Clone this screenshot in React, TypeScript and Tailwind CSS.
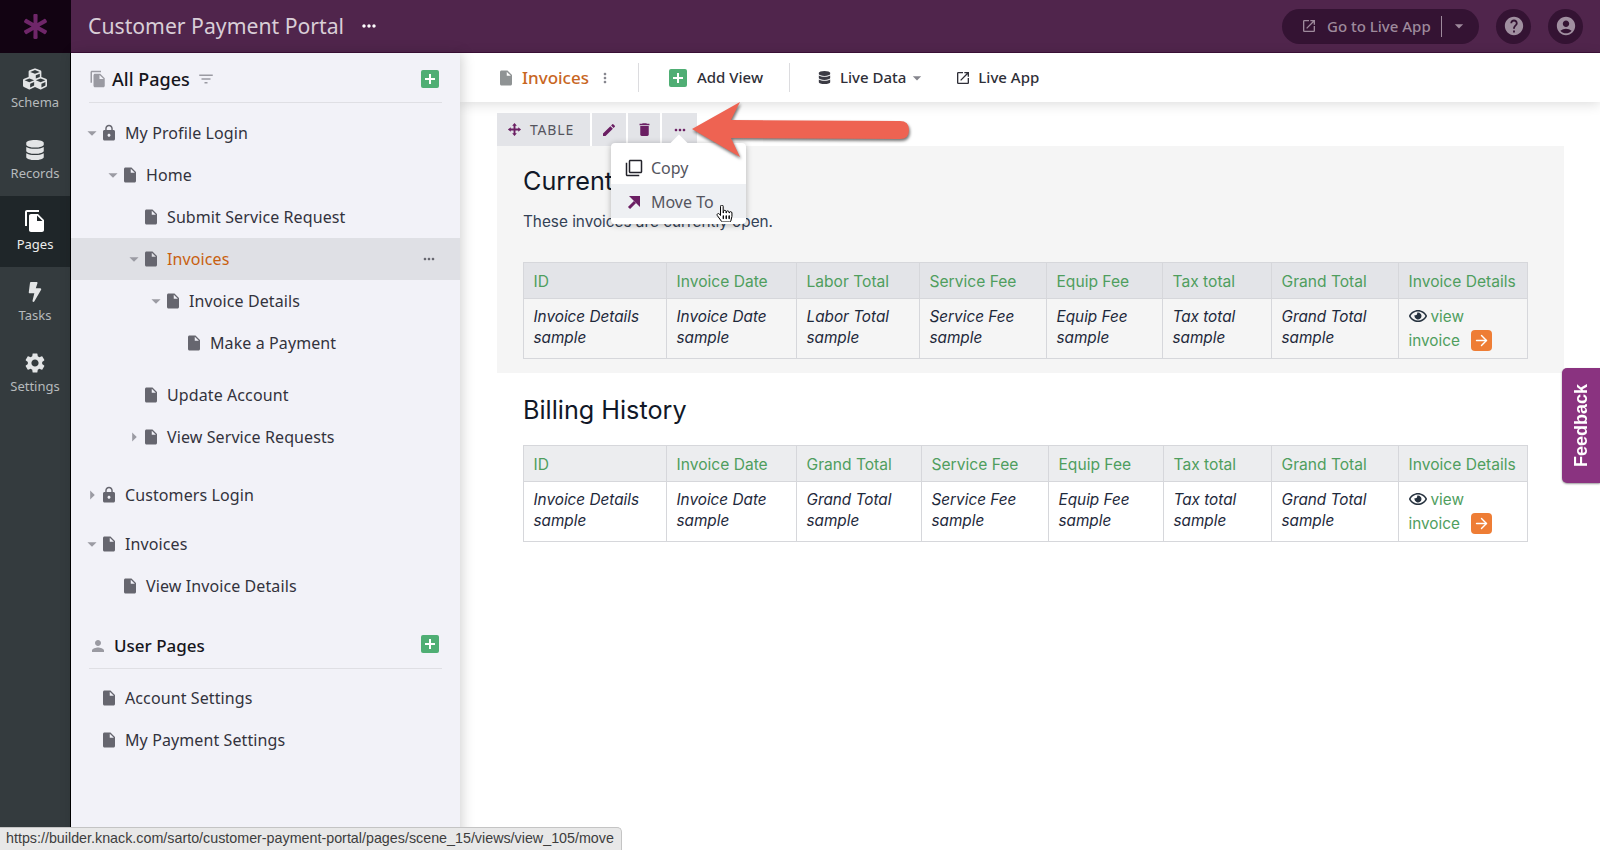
import clsx from "clsx";
import { ArrowRight } from "lucide-react";
import type { IconType } from "react-icons";
import { FaAsterisk, FaBolt, FaCubes, FaDatabase, FaHandPointer, FaRegEye } from "react-icons/fa";
import {
  MdAccountCircle,
  MdArrowDropDown,
  MdArrowRight,
  MdDelete,
  MdEdit,
  MdFileCopy,
  MdFilterList,
  MdFilterNone,
  MdHelp,
  MdInsertDriveFile,
  MdLock,
  MdMoreHoriz,
  MdMoreVert,
  MdOpenInNew,
  MdPerson,
  MdSettings,
} from "react-icons/md";

const plex = "font-['Noto_Sans','Open_Sans',sans-serif]";
const inter = "font-['Inter',sans-serif]";

const railItems: { label: string; Icon: IconType; size: number; active?: boolean }[] = [
  { label: "Schema", Icon: FaCubes, size: 24 },
  { label: "Records", Icon: FaDatabase, size: 20 },
  { label: "Pages", Icon: MdFileCopy, size: 24, active: true },
  { label: "Tasks", Icon: FaBolt, size: 20 },
  { label: "Settings", Icon: MdSettings, size: 24 },
];

function Rail() {
  return (
    <div className="w-[71px] shrink-0 bg-[#343b3e] pt-px border-r border-black">
      {railItems.map(({ label, Icon, size, active }) => (
        <div
          key={label}
          className={clsx(
            "flex h-[71px] flex-col items-center justify-start pt-[12px]",
            active ? "bg-[#1f2629] text-white" : "text-[#e3e5e6]"
          )}
        >
          <div className="flex h-[26px] items-center">
            <Icon size={size} />
          </div>
          <span className={clsx("mt-[1px] text-[13px] leading-[18px]", plex, active ? "text-[#eceded]" : "text-[#b6babc]")}>
            {label}
          </span>
        </div>
      ))}
    </div>
  );
}

function AddButton() {
  return (
    <span className="flex h-[18px] w-[18px] items-center justify-center rounded-[2px] bg-[#4fae74]">
      <span className="relative h-[10px] w-[10px]">
        <span className="absolute left-[4px] top-0 h-[10px] w-[2px] bg-white" />
        <span className="absolute left-0 top-[4px] h-[2px] w-[10px] bg-white" />
      </span>
    </span>
  );
}

const indents = ["pl-[14px]", "pl-[35px]", "pl-[56px]", "pl-[78px]", "pl-[99px]"];

function PageRow({
  label,
  level,
  caret,
  lock,
  active,
  className,
}: {
  label: string;
  level: number;
  caret?: "down" | "right";
  lock?: boolean;
  active?: boolean;
  className?: string;
}) {
  const Icon = lock ? MdLock : MdInsertDriveFile;
  const Caret = caret === "right" ? MdArrowRight : MdArrowDropDown;
  return (
    <div
      className={clsx(
        "relative flex h-[42px] items-center",
        indents[level],
        active && "bg-[#dfe0e5]",
        className
      )}
    >
      <span className="mr-[2px] flex w-[13px] justify-center text-[#9b9ba3]">
        {caret ? <Caret size={22} className="shrink-0" /> : null}
      </span>
      <Icon size={18} className="text-[#66666f]" />
      <span className={clsx("ml-[7px] text-[16px] leading-6 tracking-[0.1px]", active ? "text-[#c8600f]" : "text-[#33333d]")}>
        {label}
      </span>
      {active ? <MdMoreHoriz size={16} className="absolute right-[23px] text-[#66666f]" /> : null}
    </div>
  );
}

function Sidebar() {
  return (
    <div className={clsx("relative z-10 w-[389px] shrink-0 bg-[#f2f2f8] shadow-[2px_0_12px_rgba(0,0,0,0.18)]", plex)}>
      <div className="mx-[18px] flex h-[50px] items-center justify-between border-b border-[#dfdfe4] pr-[3px] pt-[3px]">
        <div className="flex items-center">
          <MdFileCopy size={18} className="text-[#9a9aa2]" />
          <span className="ml-[5px] text-[18px] font-medium text-[#16161c]">All Pages</span>
          <MdFilterList size={18} className="ml-[7px] text-[#9a9aa2]" />
        </div>
        <AddButton />
      </div>
      <div className="mt-[9px]">
        <PageRow level={0} caret="down" lock label="My Profile Login" />
        <PageRow level={1} caret="down" label="Home" />
        <PageRow level={2} label="Submit Service Request" />
        <PageRow level={2} caret="down" label="Invoices" active />
        <PageRow level={3} caret="down" label="Invoice Details" />
        <PageRow level={4} label="Make a Payment" />
        <PageRow level={2} label="Update Account" className="mt-[10px]" />
        <PageRow level={2} caret="right" label="View Service Requests" />
        <PageRow level={0} caret="right" lock label="Customers Login" className="mt-[16px]" />
        <PageRow level={0} caret="down" label="Invoices" className="mt-[7px]" />
        <PageRow level={1} label="View Invoice Details" />
      </div>
      <div className="mx-[18px] mt-[16px] flex h-[46px] items-center justify-between border-b border-[#dfdfe4] pr-[3px]">
        <div className="flex items-center">
          <MdPerson size={18} className="text-[#9a9aa2]" />
          <span className="ml-[7px] text-[17px] font-medium text-[#16161c]">User Pages</span>
        </div>
        <span className="mb-[4px]">
          <AddButton />
        </span>
      </div>
      <div className="mt-[8px]">
        <PageRow level={0} label="Account Settings" />
        <PageRow level={0} label="My Payment Settings" />
      </div>
    </div>
  );
}

function Toolbar() {
  return (
    <div className={clsx("flex h-[49px] items-center bg-white pl-[37px] shadow-[0_2px_12px_rgba(0,0,0,0.14)]", plex)}>
      <MdInsertDriveFile size={18} className="text-[#8f9394]" />
      <span className="ml-[7px] text-[17px] font-medium text-[#c8661f]">Invoices</span>
      <MdMoreVert size={16} className="ml-[8px] text-[#85858d]" />
      <span className="ml-[25px] h-[29px] w-px bg-[#dcdcdf]" />
      <span className="ml-[30px]"><AddButton /></span>
      <span className="ml-[10px] text-[15px] font-medium text-[#2f2f38]">Add View</span>
      <span className="ml-[26px] h-[29px] w-px bg-[#dcdcdf]" />
      <FaDatabase size={13} className="ml-[28px] text-[#3b3b44]" />
      <span className="ml-[9px] text-[15px] font-medium text-[#2f2f38]">Live Data</span>
      <MdArrowDropDown size={20} className="ml-[1px] text-[#85858d]" />
      <MdOpenInNew size={16} className="ml-[28px] text-[#2f2f38]" />
      <span className="ml-[7px] text-[15px] font-medium text-[#2f2f38]">Live App</span>
    </div>
  );
}

const colsA = ["w-[143px]", "w-[130px]", "w-[123px]", "w-[127px]", "w-[116px]", "w-[109px]", "w-[127px]", "w-[129px]"];
const colsB = ["w-[143px]", "w-[130px]", "w-[125px]", "w-[127px]", "w-[115px]", "w-[108px]", "w-[127px]", "w-[129px]"];

function ViewInvoice() {
  return (
    <span className="text-[#4f9e5e]">
      <FaRegEye size={18} className="mr-[4px] inline-block align-[-3px] text-[#26323f]" />
      view invoice
      <span className="ml-[11px] inline-flex h-[21px] w-[21px] items-center justify-center rounded-[4px] bg-[#ee7d35] align-[-3px] text-white">
        <ArrowRight size={17} />
      </span>
    </span>
  );
}

function DataTable({ columns, widths, headerBg }: { columns: string[]; widths: string[]; headerBg: string }) {
  return (
    <table className={clsx("w-[1004px] table-fixed border-collapse text-[15.3px] leading-[21px]", inter)}>
      <colgroup>
        {widths.map((w, i) => (
          <col key={i} className={w} />
        ))}
      </colgroup>
      <thead>
        <tr className={clsx("h-[36px]", headerBg)}>
          {["ID", ...columns, "Invoice Details"].map((c, i) => (
            <th key={i} className="border border-[#d6d7db] px-[9.5px] pt-[2px] text-left text-[15.6px] font-normal whitespace-nowrap text-[#4f9e5e]">
              {c}
            </th>
          ))}
        </tr>
      </thead>
      <tbody>
        <tr className="h-[60px]">
          {["Invoice Details", ...columns].map((c, i) => (
            <td key={i} className="border border-[#d6d7db] px-[9.5px] pb-[3px] italic text-[#1e293b]">
              {c} sample
            </td>
          ))}
          <td className="border border-[#d6d7db] px-[9.5px] pt-[1px] leading-[24px]">
            <ViewInvoice />
          </td>
        </tr>
      </tbody>
    </table>
  );
}

function MoveMenu() {
  return (
    <div className={clsx("absolute left-[611px] top-[143px] z-20 w-[135px] rounded-[4px] bg-white pb-[6px] pt-[7px] shadow-[0_1px_6px_rgba(0,0,0,0.28)]", plex)}>
      <span className="absolute left-[62px] top-[-6px] h-[12px] w-[12px] rotate-45 bg-white" />
      <div className="relative flex h-[34px] items-center pl-[14px] pt-[1px] text-[16px] text-[#55555e]">
        <MdFilterNone size={18} className="text-[#22222a]" />
        <span className="ml-[8px]">Copy</span>
      </div>
      <div className="relative flex h-[34px] items-center bg-[#eef0f3] pl-[14px] pt-[2px] text-[16px] text-[#55555e]">
        <svg width="18" height="18" viewBox="0 0 18 18" className="text-[#6b1f63]" fill="currentColor">
          <path d="M4 15 L10 9" stroke="currentColor" strokeWidth="3" />
          <path d="M4 3 H15 V14 Z" />
        </svg>
        <span className="ml-[8px]">Move To</span>
        <FaHandPointer size={17} className="absolute left-[105px] top-[21px] fill-white stroke-black stroke-[30px]" />
      </div>
    </div>
  );
}

function RedArrow() {
  return (
    <svg
      className="absolute left-[685px] top-[98px] z-30 h-[65px] w-[230px] drop-shadow-[1px_2px_1.5px_rgba(0,0,0,0.55)]"
      viewBox="685 98 230 65"
    >
      <path
        d="M692 129 L740 102 L731 120 L900 121 Q909 121 909 130 Q909 139 900 139 L731 138 L740 157 Z"
        fill="#ee6352"
      />
    </svg>
  );
}

export default function App() {
  return (
    <div className="relative flex h-[850px] w-[1600px] flex-col overflow-hidden bg-white">
      <div className={clsx("flex h-[53px] shrink-0 items-center border-b border-[#3c1038] bg-[#50254c]", plex)}>
        <div className="flex h-[53px] w-[71px] items-center justify-center bg-[#120312]">
          <FaAsterisk size={25} className="text-[#6f2669]" />
        </div>
        <span className="ml-[17px] text-[21.2px] text-[#d9ced7]">Customer Payment Portal</span>
        <MdMoreHoriz size={20} className="ml-[15px] text-white" />
        <div className="ml-auto flex h-[35px] w-[197px] items-center rounded-full bg-[#341333] pl-[19px] text-[#9e8a9c]">
          <MdOpenInNew size={16} />
          <span className="ml-[10px] text-[15px] font-medium">Go to Live App</span>
          <span className="ml-[10px] h-[21px] w-px bg-[#9e8a9c]" />
          <MdArrowDropDown size={20} className="ml-[7px]" />
        </div>
        <div className="ml-[17px] flex h-[35px] w-[35px] items-center justify-center rounded-full bg-[#341333] text-[#a08fa0]">
          <MdHelp size={22} />
        </div>
        <div className="ml-[17px] mr-[17px] flex h-[35px] w-[35px] items-center justify-center rounded-full bg-[#341333] text-[#a08fa0]">
          <MdAccountCircle size={22} />
        </div>
      </div>
      <div className="flex min-h-0 flex-1">
        <Rail />
        <Sidebar />
        <div className="min-w-0 flex-1">
          <Toolbar />
          <div className="pl-[37px] pr-[36px]">
            <div className={clsx("mt-[11px] flex h-[33px] gap-[2px] text-[#55555e]", plex)}>
              <div className="flex w-[93px] items-center bg-[#e3e4e8] pl-[10px]">
                <svg width="15" height="15" viewBox="0 0 16 16" className="text-[#6b1f63]" fill="currentColor">
                  <path d="M8 1 L10.5 4 H9 V7 H12 V5.5 L15 8 L12 10.5 V9 H9 V12 H10.5 L8 15 L5.5 12 H7 V9 H4 V10.5 L1 8 L4 5.5 V7 H7 V4 H5.5 Z" />
                </svg>
                <span className="ml-[8px] text-[14px] tracking-[0.8px]">TABLE</span>
              </div>
              <div className="flex w-[34px] items-center justify-center bg-[#e3e4e8]">
                <MdEdit size={16} className="text-[#6b1f63]" />
              </div>
              <div className="flex w-[32px] items-center justify-center bg-[#e3e4e8]">
                <MdDelete size={17} className="text-[#6b1f63]" />
              </div>
              <div className="flex w-[35px] items-center justify-center bg-[#e3e4e8]">
                <MdMoreHoriz size={16} className="text-[#6b1f63]" />
              </div>
            </div>
            <div className={clsx("bg-[#f5f5f5] pb-[14px] pl-[26px] pt-[16px]", inter)}>
              <h2 className="text-[25.2px] leading-[38px] text-[#111827]">Current Invoices</h2>
              <p className="mt-[12px] text-[15.3px] leading-[20px] text-[#334155]">These invoices are currently open.</p>
              <div className="mt-[30px]">
                <DataTable
                  columns={["Invoice Date", "Labor Total", "Service Fee", "Equip Fee", "Tax total", "Grand Total"]}
                  widths={colsA}
                  headerBg="bg-[#e3e4e8]"
                />
              </div>
            </div>
            <div className={clsx("pl-[26px]", inter)}>
              <h2 className="mt-[18px] text-[25.2px] leading-[38px] text-[#111827]">Billing History</h2>
              <div className="mt-[16px]">
                <DataTable
                  columns={["Invoice Date", "Grand Total", "Service Fee", "Equip Fee", "Tax total", "Grand Total"]}
                  widths={colsB}
                  headerBg="bg-[#ecedef]"
                />
              </div>
            </div>
          </div>
        </div>
      </div>
      <MoveMenu />
      <RedArrow />
      <div className="absolute right-0 top-[368px] z-20 flex h-[115px] w-[38px] items-center justify-center rounded-l-[5px] bg-[#8a3380] shadow-[0_1px_2px_rgba(0,0,0,0.4)]">
        <span className="rotate-180 font-['Liberation_Sans',sans-serif] text-[18px] font-bold text-white [writing-mode:vertical-rl]">
          Feedback
        </span>
      </div>
      <div className="absolute bottom-0 left-0 z-40 flex h-[23px] w-[622px] items-center rounded-tr-[5px] border-r border-t border-[#c4c4c4] bg-[#e8e8e8] pl-[6px] font-['Liberation_Sans',sans-serif] text-[14.3px] text-[#3d3d3d]">
        https://builder.knack.com/sarto/customer-payment-portal/pages/scene_15/views/view_105/move
      </div>
    </div>
  );
}
